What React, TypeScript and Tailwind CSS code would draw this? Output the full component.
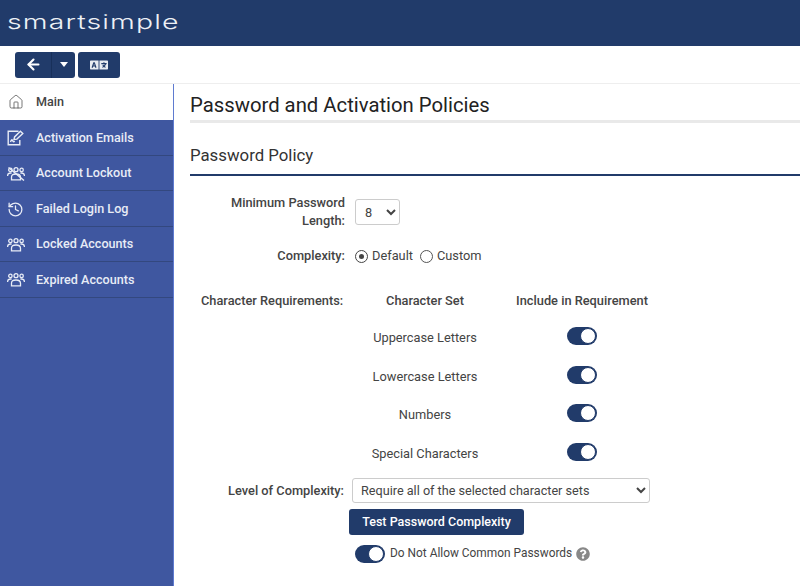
import { ArrowLeft, History, House } from "lucide-react";
import { FaLanguage, FaQuestionCircle } from "react-icons/fa";

const NAVY = "bg-[#213b6a]";

function GroupIcon({ slashed }: { slashed?: boolean }) {
    return (
        <svg width="18" height="14" viewBox="0 0 18 14" fill="none" stroke="currentColor" strokeWidth="1.3">
            <circle cx="3.4" cy="2.9" r="1.7" />
            <circle cx="9" cy="2.7" r="2" />
            <circle cx="14.6" cy="2.9" r="1.7" />
            <path d="M0.6 9c0-2 1.2-3 3-3h1M17.4 9c0-2-1.2-3-3-3h-1" />
            <path d="M4.5 12.8v-2.6c0-2 1.5-3.2 4.5-3.2s4.5 1.2 4.5 3.2v2.6z" />
            {slashed && <path d="M1.5 0.5 17 13.5" strokeWidth="1.4" />}
        </svg>
    );
}

function EmailIcon() {
    return (
        <svg width="17" height="16" viewBox="0 0 17 16" fill="none" stroke="currentColor" strokeWidth="1.4">
            <path d="M11.5 1.2H1.2v13.6h11.6V10" />
            <path d="M3.5 12c1-2.5 1.6-2.8 2.2-1.2.5 1.3 1.2 1.2 1.9 0.2" />
            <path d="M7 9.5l0.6-2.6L13.4 1.2l2.4 2.3-5.9 5.6z" />
        </svg>
    );
}

function Toggle() {
    return (
        <div className={`flex h-[18px] w-[30px] items-center justify-end rounded-full ${NAVY}`}>
            <div className="mr-[1px] h-[16px] w-[16px] rounded-full border border-[#213b6a] bg-white" />
        </div>
    );
}

const menu = [
    { label: "Activation Emails", icon: <EmailIcon /> },
    { label: "Account Lockout", icon: <GroupIcon slashed /> },
    { label: "Failed Login Log", icon: <History size={17} strokeWidth={1.8} /> },
    { label: "Locked Accounts", icon: <GroupIcon /> },
    { label: "Expired Accounts", icon: <GroupIcon /> },
];

const charSets = ["Uppercase Letters", "Lowercase Letters", "Numbers", "Special Characters"];

export default function App() {
    return (
        <div className="flex h-[586px] w-[800px] flex-col overflow-hidden bg-white font-['Roboto',sans-serif] text-[12.8px] text-[#444]">
            {/* Header */}
            <div className={`flex h-[46px] shrink-0 items-center pb-[3px] pl-[7px] ${NAVY}`}>
                <span className="origin-left scale-x-[1.42] font-['Inter',sans-serif] text-[20px] font-light tracking-[0.8px] text-[#eef1f6]">smartsimple</span>
            </div>

            {/* Toolbar */}
            <div className="flex h-[38px] shrink-0 items-center gap-[3px] border-b border-[#eeeeee] pl-[15px]">
                <div className={`flex h-[26px] w-[60px] items-center rounded-[3px] text-white ${NAVY}`}>
                    <div className="flex h-full w-[37px] items-center justify-center border-r border-[#18305a]">
                        <ArrowLeft size={17} strokeWidth={3} />
                    </div>
                    <div className="flex flex-1 justify-center">
                        <div className="h-0 w-0 border-x-[4.5px] border-t-[5px] border-x-transparent border-t-white" />
                    </div>
                </div>
                <div className={`flex h-[26px] w-[42px] items-center justify-center rounded-[3px] text-[#e8ecf2] ${NAVY}`}>
                    <FaLanguage size={18} />
                </div>
            </div>

            <div className="flex min-h-0 flex-1">
                {/* Sidebar */}
                <div className="flex w-[174px] shrink-0 flex-col border-r border-[#5f7bd0] bg-[#3f57a0] text-[12.6px]">
                    <div className="flex h-[36px] items-center bg-white text-[#444]">
                        <div className="flex w-[36px] justify-center pr-[5px]"><House size={16} strokeWidth={1.1} /></div>
                        <span className="font-medium">Main</span>
                    </div>
                    {menu.map((item) => (
                        <div key={item.label} className="flex h-[35.5px] items-center border-b border-[#33487f] pt-[2px] text-[#e8ecf6]">
                            <div className="flex w-[36px] justify-center pr-[5px]">{item.icon}</div>
                            <span className="font-medium">{item.label}</span>
                        </div>
                    ))}
                </div>

                {/* Main */}
                <div className="min-w-0 flex-1">
                    <div className="ml-[16px] flex h-[39px] items-center border-b-[3px] border-[#e9e9e9] pt-[6px] text-[20.3px] text-[#222]">
                        Password and Activation Policies
                    </div>
                    <div className="ml-[16px] flex h-[53px] items-center border-b-2 border-[#213b6a] pt-[14px] text-[16.8px] text-[#333]">
                        Password Policy
                    </div>

                    <div className="pl-[16px]">
                        <div className="flex items-center pt-[18px]">
                            <div className="w-[155px] pl-[20px] text-right leading-[18px] font-medium">Minimum Password Length:</div>
                            <select defaultValue="8" className="ml-[10px] h-[26px] w-[45px] rounded-[3px] border border-[#ccc] bg-white pl-[5px] outline-none">
                                <option>8</option>
                            </select>
                        </div>

                        <div className="mt-[17px] flex h-[18px] items-center">
                            <div className="w-[155px] text-right font-medium">Complexity:</div>
                            <div className="ml-[10px] flex items-center gap-[4px]">
                                <div className="flex h-[13px] w-[13px] items-center justify-center rounded-full border border-[#444]">
                                    <div className="h-[5px] w-[5px] rounded-full bg-[#444]" />
                                </div>
                                <span>Default</span>
                                <div className="ml-[3px] h-[13px] w-[13px] rounded-full border border-[#555]" />
                                <span>Custom</span>
                            </div>
                        </div>

                        <div className="mt-[26px] grid grid-cols-[159px_130px_184px] items-center pl-[11px]">
                            <div className="flex h-[18px] items-center font-medium">Character Requirements:</div>
                            <div className="text-center font-medium">Character Set</div>
                            <div className="text-center font-medium">Include in Requirement</div>
                            <div className="col-span-3 h-[8px]" />
                            {charSets.map((name) => (
                                <div key={name} className="col-start-2 col-span-2 grid h-[38.7px] grid-cols-[130px_184px] items-center">
                                    <div className="text-center">{name}</div>
                                    <div className="flex justify-center pb-[3px]"><Toggle /></div>
                                </div>
                            ))}
                        </div>

                        <div className="mt-[5px] flex items-center">
                            <div className="w-[154px] text-right font-medium">Level of Complexity:</div>
                            <select className="ml-[8px] h-[25px] w-[298px] rounded-[3px] border border-[#ccc] bg-white pl-[4px] text-[12.65px] outline-none">
                                <option>Require all of the selected character sets</option>
                            </select>
                        </div>

                        <button className={`mt-[6px] ml-[159px] flex h-[26px] w-[175px] items-center justify-center rounded-[3px] text-[12.5px] font-medium text-white ${NAVY}`}>
                            Test Password Complexity
                        </button>

                        <div className="mt-[10px] ml-[165px] flex items-center">
                            <Toggle />
                            <span className="ml-[5px] text-[11.9px]">Do Not Allow Common Passwords</span>
                            <FaQuestionCircle size={14} className="ml-[4px] text-[#888]" />
                        </div>
                    </div>
                </div>
            </div>
        </div>
    );
}
